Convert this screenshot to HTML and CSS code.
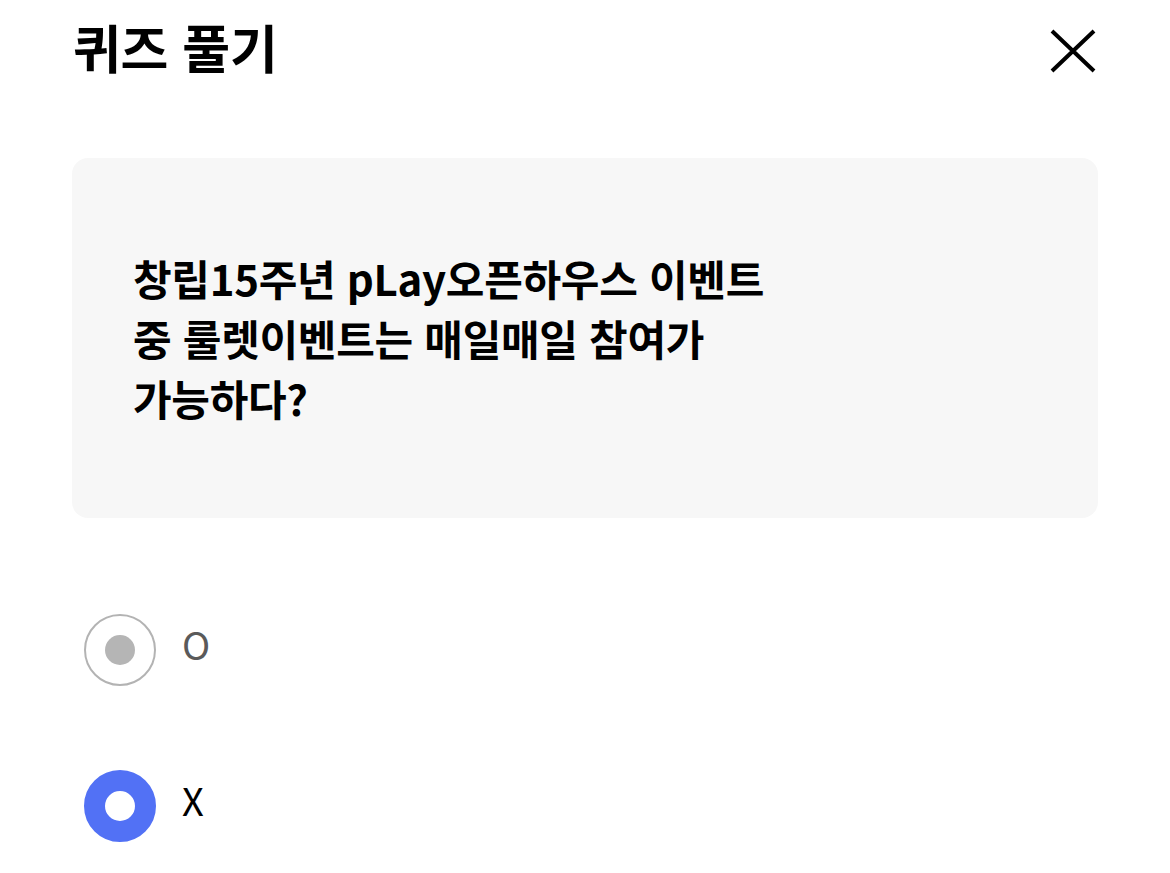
FILE: index.html
```html
<!DOCTYPE html>
<html lang="ko">
<head>
<meta charset="utf-8">
<title>퀴즈 풀기</title>
<link rel="stylesheet" href="styles.css">
</head>
<body>
<div class="page">
  <header class="header">
    <h1 class="title">퀴즈 풀기</h1>
    <button class="close" aria-label="닫기">
      <svg width="46" height="44" viewBox="0 0 46 44"><path d="M2 2 L44 42 M44 2 L2 42" stroke="#000" stroke-width="4" fill="none"/></svg>
    </button>
  </header>
  <section class="card">
    <p class="question">창립15주년 pLay오픈하우스 이벤트<br>중 룰렛이벤트는 매일매일 참여가<br>가능하다?</p>
  </section>
  <div class="options">
    <label class="option">
      <span class="radio radio-disabled"></span>
      <span class="label label-muted">O</span>
    </label>
    <label class="option">
      <span class="radio radio-checked"></span>
      <span class="label">X</span>
    </label>
  </div>
</div>
</body>
</html>
```
FILE: styles.css
```css
* { box-sizing: border-box; }
html, body { margin: 0; padding: 0; background: #fff; }
body {
  font-family: "Noto Sans CJK KR", "Noto Sans", sans-serif;
  color: #000;
}
.page { width: 1170px; }
.header {
  height: 94px;
  padding: 0 74px 0 73px;
  display: flex;
  align-items: center;
  justify-content: space-between;
}
.title {
  margin: 0;
  font-size: 52px;
  font-weight: 600;
  line-height: 1.2;
  letter-spacing: -0.3px;
}
.close {
  border: 0;
  background: none;
  padding: 0;
  margin-top: 8px;
  width: 46px;
  height: 44px;
  display: block;
}
.close svg { display: block; }
.card {
  margin: 64px 72px 0 72px;
  height: 360px;
  background: #f7f7f7;
  border-radius: 16px;
  padding: 90px 61px;
}
.question {
  margin: 0;
  font-size: 42px;
  font-weight: 600;
  line-height: 60px;
  letter-spacing: -0.3px;
}
.options {
  margin-top: 96px;
  padding-left: 84px;
  display: flex;
  flex-direction: column;
  gap: 84px;
}
.option {
  display: flex;
  align-items: center;
  gap: 26px;
  height: 72px;
}
.radio {
  width: 72px;
  height: 72px;
  border-radius: 50%;
  display: flex;
  align-items: center;
  justify-content: center;
  flex: none;
}
.radio-disabled {
  border: 2px solid #b3b3b3;
  background: #fff;
}
.radio-disabled::after {
  content: "";
  width: 30px;
  height: 30px;
  border-radius: 50%;
  background: #b5b5b5;
}
.radio-checked {
  border: 21px solid #5271f5;
  background: #fff;
}
.label {
  font-size: 38px;
  font-weight: 400;
  line-height: 1;
  padding-bottom: 12px;
  color: #000;
}
.label-muted { color: #5a5a5a; }
```
